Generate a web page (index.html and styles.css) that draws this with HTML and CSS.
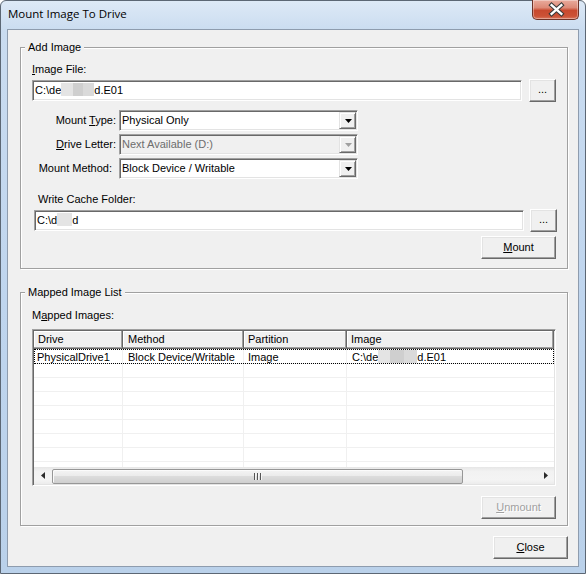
FILE: index.html
```html
<!DOCTYPE html>
<html>
<head>
<meta charset="utf-8">
<title>Mount Image To Drive</title>
<link rel="stylesheet" href="styles.css">
</head>
<body>
<div class="window">
  <div class="titlebar">
    <span class="title">Mount Image To Drive</span>
    <div class="close-btn">
      <svg width="47" height="20" viewBox="0 0 47 20">
        <path d="M20 5 L30 14 M30 5 L20 14" stroke="#3a3a3a" stroke-width="4.6" stroke-linecap="square" fill="none"/>
        <path d="M20 5 L30 14 M30 5 L20 14" stroke="#ffffff" stroke-width="2.4" stroke-linecap="square" fill="none"/>
      </svg>
    </div>
  </div>
  <div class="client">
    <div class="group group-add">
      <span class="legend">Add Image</span>
      <div class="lbl lbl-image"><u>I</u>mage File:</div>
      <div class="path-row">
        <div class="textbox">C:\de<span class="blur bw12 g1"></span><span class="blur bw10 g2"></span><span class="blur bw11 g3"></span>d.E01</div>
        <div class="btn btn-browse">...</div>
      </div>
      <div class="combo-grid">
        <label class="clabel">Mount <u>T</u>ype:</label>
        <div class="combo">
          <span class="combo-text">Physical Only</span>
          <span class="combo-btn"><svg width="7" height="4" viewBox="0 0 7 4"><polygon points="0,0 7,0 3.5,4" fill="#000"/></svg></span>
        </div>
        <label class="clabel"><u>D</u>rive Letter:</label>
        <div class="combo combo-disabled">
          <span class="combo-text">Next Available (D:)</span>
          <span class="combo-btn"><svg width="7" height="4" viewBox="0 0 7 4"><polygon points="0,0 7,0 3.5,4" fill="#a0a0a0"/></svg></span>
        </div>
        <label class="clabel clabel-method">Mount Method:</label>
        <div class="combo">
          <span class="combo-text">Block Device / Writable</span>
          <span class="combo-btn"><svg width="7" height="4" viewBox="0 0 7 4"><polygon points="0,0 7,0 3.5,4" fill="#000"/></svg></span>
        </div>
      </div>
      <div class="lbl lbl-cache">Write Cache Folder:</div>
      <div class="path-row path-row-cache">
        <div class="textbox">C:\d<span class="blur bw15 g1"></span>d</div>
        <div class="btn btn-browse btn-browse-cache">...</div>
      </div>
      <div class="btn btn-mount"><span><u>M</u>ount</span></div>
    </div>

    <div class="group group-map">
      <span class="legend">Mapped Image List</span>
      <div class="lbl lbl-mapped">M<u>a</u>pped Images:</div>
      <div class="listview">
        <div class="lv-header">
          <div class="hcell c1">Drive</div>
          <div class="hcell c2">Method</div>
          <div class="hcell c3">Partition</div>
          <div class="hcell c4">Image</div>
        </div>
        <div class="lv-rows">
          <div class="row row-first focused">
            <div class="cell c1">PhysicalDrive1</div>
            <div class="cell c2">Block Device/Writable</div>
            <div class="cell c3">Image</div>
            <div class="cell c4">C:\de<span class="blur bw12 g1"></span><span class="blur bw14 g2"></span><span class="blur bw13 g3"></span>d.E01</div>
          </div>
          <div class="row"><div class="cell"></div><div class="cell"></div><div class="cell"></div><div class="cell"></div></div>
          <div class="row"><div class="cell"></div><div class="cell"></div><div class="cell"></div><div class="cell"></div></div>
          <div class="row"><div class="cell"></div><div class="cell"></div><div class="cell"></div><div class="cell"></div></div>
          <div class="row"><div class="cell"></div><div class="cell"></div><div class="cell"></div><div class="cell"></div></div>
          <div class="row"><div class="cell"></div><div class="cell"></div><div class="cell"></div><div class="cell"></div></div>
          <div class="row"><div class="cell"></div><div class="cell"></div><div class="cell"></div><div class="cell"></div></div>
          <div class="row"><div class="cell"></div><div class="cell"></div><div class="cell"></div><div class="cell"></div></div>
          <div class="row"><div class="cell"></div><div class="cell"></div><div class="cell"></div><div class="cell"></div></div>
        </div>
        <div class="hscroll">
          <div class="sb-arrow"><svg width="4" height="7" viewBox="0 0 4 7"><polygon points="4,0 0,3.5 4,7" fill="#2b2b2b"/></svg></div>
          <div class="sb-thumb"><span class="grip"></span></div>
          <div class="sb-track"></div>
          <div class="sb-arrow"><svg width="4" height="7" viewBox="0 0 4 7"><polygon points="0,0 4,3.5 0,7" fill="#2b2b2b"/></svg></div>
        </div>
      </div>
      <div class="btn btn-unmount disabled"><span><u>U</u>nmount</span></div>
    </div>

    <div class="btn btn-close"><span><u>C</u>lose</span></div>
  </div>
</div>
</body>
</html>
```

FILE: styles.css
```css
* { box-sizing: border-box; }
html, body { margin: 0; padding: 0; }
body {
  width: 586px;
  height: 574px;
  overflow: hidden;
  background: #ffffff;
  font-family: "Liberation Sans", Arial, sans-serif;
  font-size: 11px;
  color: #000;
}
u { text-decoration: underline; text-underline-offset: 1px; }

.window {
  width: 586px;
  height: 574px;
  border: 1px solid #5c6774;
  border-radius: 6px 6px 0 0;
  background: linear-gradient(#dde9f6, #cadcf0 30px, #bfd5ee 300px, #bad1ea);
  display: flex;
  flex-direction: column;
}

.titlebar {
  height: 28px;
  display: flex;
  align-items: flex-start;
  justify-content: space-between;
  padding-left: 7px;
}
.title {
  font-family: "Open Sans", "Noto Sans", sans-serif;
  font-size: 11.5px;
  line-height: 16px;
  margin-top: 5px;
  color: #000;
}
.close-btn {
  width: 47px;
  height: 20px;
  margin-top: -1px;
  margin-right: 6px;
  border: 1px solid #6e3328;
  border-top: none;
  border-radius: 0 0 5px 5px;
  background: linear-gradient(#e9ab9d 0%, #dd8a77 40%, #c8492f 55%, #cc5236 85%, #d9775f 100%);
  box-shadow: inset 0 0 0 1px rgba(255, 255, 255, 0.35);
  display: flex;
  align-items: center;
  justify-content: center;
  overflow: hidden;
}
.close-btn svg { display: block; margin-left: -1px; }

.client {
  margin: 0 6px 6px 6px;
  flex: 1;
  border: 1px solid #8e9cae;
  background: #f0f0f0;
  padding: 17px 0 0 12px;
}

/* group boxes */
.group {
  position: relative;
  width: 548px;
  border: 1px solid #a0a0a0;
  box-shadow: inset 1px 1px 0 #fff, 1px 1px 0 #fff;
  padding-left: 11px;
}
.group-add { height: 222px; }
.group-map { height: 234px; margin-top: 23px; }
.legend {
  position: absolute;
  top: -7px;
  left: 4px;
  padding: 0 3px;
  line-height: 13px;
  background: #f0f0f0;
}

.lbl { line-height: 13px; white-space: nowrap; }
.lbl-image { margin-top: 15px; }
.lbl-cache { margin-top: 14px; margin-left: 6px; }
.lbl-mapped { margin-top: 16px; }

/* text boxes */
.path-row {
  display: flex;
  align-items: center;
  height: 23px;
  margin-top: 3px;
}
.path-row-cache { margin-left: 2px; }
.textbox {
  width: 490px;
  height: 21px;
  background: #fff;
  border: 1px solid;
  border-color: #a0a0a0 #fff #fff #a0a0a0;
  box-shadow: inset 1px 1px 0 #696969, inset -1px -1px 0 #e3e3e3;
  padding-left: 2px;
  line-height: 19px;
  white-space: nowrap;
  overflow: hidden;
}
.blur {
  display: inline-block;
  height: 13px;
  vertical-align: -2px;
}
.bw10 { width: 10px; }
.bw11 { width: 11px; }
.bw12 { width: 12px; }
.bw13 { width: 13px; }
.bw14 { width: 14px; }
.bw15 { width: 15px; }
.g1 { background: #e4e4e4; }
.g2 { background: #cfcfcf; }
.g3 { background: #dadada; }

/* buttons */
.btn {
  width: 75px;
  height: 23px;
  background: #f0f0f0;
  border: 1px solid;
  border-color: #fff #696969 #696969 #fff;
  box-shadow: inset -1px -1px 0 #a0a0a0, inset 1px 1px 0 #e3e3e3;
  display: flex;
  align-items: center;
  justify-content: center;
  line-height: 13px;
  white-space: nowrap;
}
.btn-browse { width: 27px; margin-left: 7px; padding-bottom: 3px; }
.btn-browse-cache { margin-left: 6px; }
.btn-mount { margin-top: 4px; margin-left: 449px; }
.btn-unmount { margin-top: 10px; margin-left: 449px; }
.btn.disabled { color: #a0a0a0; text-shadow: 1px 1px 0 #fff; }
.btn-close { margin-top: 10px; margin-left: 473px; }

/* combos */
.combo-grid {
  display: grid;
  grid-template-columns: 84px 239px;
  column-gap: 3px;
  row-gap: 3px;
  margin-top: 8px;
  align-items: center;
}
.clabel { text-align: right; white-space: nowrap; line-height: 13px; }
.clabel-method { padding-right: 4px; }
.combo {
  height: 21px;
  display: flex;
  background: #fff;
  border: 1px solid;
  border-color: #a0a0a0 #fff #fff #a0a0a0;
  box-shadow: inset 1px 1px 0 #696969, inset -1px -1px 0 #e3e3e3;
  padding: 1px;
}
.combo-text {
  flex: 1;
  padding-left: 1px;
  line-height: 17px;
  white-space: nowrap;
}
.combo-btn {
  width: 17px;
  background: #f0f0f0;
  border: 1px solid;
  border-color: #e3e3e3 #696969 #696969 #e3e3e3;
  box-shadow: inset 1px 1px 0 #fff, inset -1px -1px 0 #a0a0a0;
  display: flex;
  align-items: center;
  justify-content: center;
}
.combo-btn svg { display: block; margin-left: 1px; }
.combo-disabled { background: #f0f0f0; color: #6d6d6d; }

/* list view */
.listview {
  margin-top: 7px;
  width: 524px;
  height: 157px;
  border: 1px solid;
  border-color: #a0a0a0 #fff #fff #a0a0a0;
  box-shadow: inset 1px 1px 0 #696969, inset -1px -1px 0 #e3e3e3;
  padding: 1px;
  background: #fff;
  display: flex;
  flex-direction: column;
}
.lv-header {
  height: 18px;
  display: grid;
  grid-template-columns: 89px 121px 103px 1fr;
  flex: none;
}
.hcell {
  background: #f0f0f0;
  border-right: 1px solid #696969;
  border-bottom: 1px solid #696969;
  box-shadow: inset -1px -1px 0 #a0a0a0, inset 1px 1px 0 #fff;
  line-height: 17px;
  padding-left: 4px;
  white-space: nowrap;
}
.hcell.c2 { padding-left: 5px; }
.lv-rows {
  flex: 1;
  overflow: hidden;
  min-height: 0;
}
.row {
  height: 14px;
  display: grid;
  grid-template-columns: 89px 121px 103px 1fr;
  border-bottom: 1px solid #f0f0f0;
}
.row-first { height: 15px; padding-top: 1px; }
.focused { outline: 1px dotted #000; outline-offset: -1px; }
.cell {
  border-right: 1px solid #f0f0f0;
  line-height: 14px;
  white-space: nowrap;
  overflow: hidden;
}
.cell:last-child { border-right: none; }
.cell.c1 { padding-left: 3px; }
.cell.c2 { padding-left: 5px; }
.cell.c3 { padding-left: 4px; }
.cell.c4 { padding-left: 5px; }

/* scrollbar */
.hscroll {
  height: 17px;
  flex: none;
  display: flex;
  background: linear-gradient(#e6e6e6, #f2f2f2 25%, #f4f4f4 75%, #ececec);
}
.sb-arrow {
  width: 17px;
  display: flex;
  align-items: center;
  justify-content: center;
}
.sb-arrow svg { display: block; }
.sb-thumb {
  width: 411px;
  height: 15px;
  margin-top: 2px;
  margin-left: 1px;
  border: 1px solid #979797;
  border-radius: 2px;
  background: linear-gradient(#f4f4f4, #ebebeb 45%, #dcdcdc 50%, #cfcfcf);
  box-shadow: inset 1px 1px 0 #fbfbfb;
  display: flex;
  align-items: center;
  justify-content: center;
}
.grip {
  width: 8px;
  height: 7px;
  background: repeating-linear-gradient(to right, #555 0 1px, #f5f5f5 1px 2px, transparent 2px 3px);
}
.sb-track { flex: 1; }
```
